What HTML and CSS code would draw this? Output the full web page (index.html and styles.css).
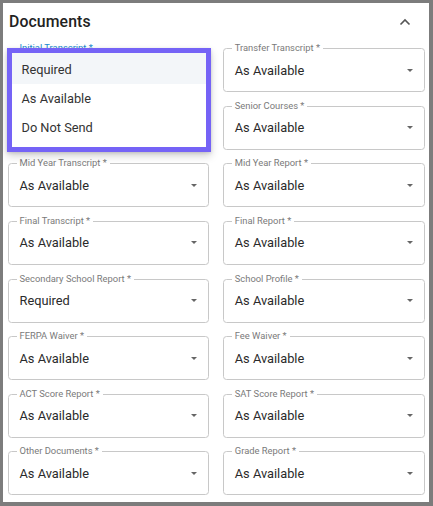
FILE: index.html
```html
<!DOCTYPE html>
<html>
<head>
<meta charset="utf-8">
<link rel="stylesheet" href="styles.css">
</head>
<body>
<div class="panel">
  <div class="header">
    <h2 class="title">Documents</h2>
    <svg class="chev" width="12" height="8" viewBox="0 0 12 8"><path d="M1.5 6.5 L6 2 L10.5 6.5" fill="none" stroke="#555" stroke-width="1.6"/></svg>
  </div>
  <div class="grid">
    <div class="field focused"><span class="label">Initial Transcript *</span><span class="value"></span><span class="caret"></span></div>
    <div class="field"><span class="label">Transfer Transcript *</span><span class="value">As Available</span><span class="caret"></span></div>
    <div class="field"><span class="value"></span><span class="caret"></span></div>
    <div class="field"><span class="label">Senior Courses *</span><span class="value">As Available</span><span class="caret"></span></div>
    <div class="field"><span class="label">Mid Year Transcript *</span><span class="value">As Available</span><span class="caret"></span></div>
    <div class="field"><span class="label">Mid Year Report *</span><span class="value">As Available</span><span class="caret"></span></div>
    <div class="field"><span class="label">Final Transcript *</span><span class="value">As Available</span><span class="caret"></span></div>
    <div class="field"><span class="label">Final Report *</span><span class="value">As Available</span><span class="caret"></span></div>
    <div class="field"><span class="label">Secondary School Report *</span><span class="value">Required</span><span class="caret"></span></div>
    <div class="field"><span class="label">School Profile *</span><span class="value">As Available</span><span class="caret"></span></div>
    <div class="field"><span class="label">FERPA Waiver *</span><span class="value">As Available</span><span class="caret"></span></div>
    <div class="field"><span class="label">Fee Waiver *</span><span class="value">As Available</span><span class="caret"></span></div>
    <div class="field"><span class="label">ACT Score Report *</span><span class="value">As Available</span><span class="caret"></span></div>
    <div class="field"><span class="label">SAT Score Report *</span><span class="value">As Available</span><span class="caret"></span></div>
    <div class="field"><span class="label">Other Documents *</span><span class="value">As Available</span><span class="caret"></span></div>
    <div class="field"><span class="label">Grade Report *</span><span class="value">As Available</span><span class="caret"></span></div>
  </div>
  <div class="menu">
    <div class="item selected">Required</div>
    <div class="item">As Available</div>
    <div class="item">Do Not Send</div>
  </div>
</div>
</body>
</html>
```
FILE: styles.css
```css
html, body {
  margin: 0;
  padding: 0;
}
body {
  background: #7c7c7c;
  width: 433px;
  height: 506px;
  overflow: hidden;
  font-family: Roboto, "Liberation Sans", sans-serif;
}
.panel {
  position: relative;
  margin: 3px 4px 0 3px;
  height: 499px;
  background: #fff;
  overflow: hidden;
}
.header {
  height: 37px;
  display: flex;
  align-items: center;
  justify-content: space-between;
  padding: 0 18px 0 6px;
}
.title {
  margin: 0;
  font-size: 15.8px;
  font-weight: 500;
  color: #222;
  letter-spacing: 0.1px;
}
.chev {
  display: block;
}
.grid {
  margin-top: 8.3px;
  padding: 0 4.5px 0 5px;
  display: grid;
  grid-template-columns: 1fr 1fr;
  column-gap: 14px;
  row-gap: 13.57px;
}
.field {
  position: relative;
  height: 44px;
  box-sizing: border-box;
  border: 1px solid #c8c8c8;
  border-radius: 3.5px;
  display: flex;
  align-items: center;
  padding: 0 0 0 10.5px;
}
.field.focused {
  border: 2px solid #1a8ad0;
}
.label {
  position: absolute;
  left: 7.5px;
  top: -7px;
  padding: 0 3px;
  background: #fff;
  font-size: 9.4px;
  line-height: 12px;
  color: #7a7a7a;
}
.focused .label {
  color: #1a8ad0;
  left: 6.5px;
  top: -8px;
}
.value {
  flex: 1;
  font-size: 12.8px;
  color: #2a2a2a;
}
.caret {
  width: 0;
  height: 0;
  border-left: 3.8px solid transparent;
  border-right: 3.8px solid transparent;
  border-top: 3.8px solid #666;
  margin-right: 11px;
}
.menu {
  position: absolute;
  left: 4px;
  top: 44.7px;
  width: 204px;
  height: 104px;
  box-sizing: border-box;
  border: 5.3px solid #7563f6;
  background: #fff;
  padding-bottom: 4px;
  box-shadow: 0 4px 8px rgba(0,0,0,0.18), 0 1px 3px rgba(0,0,0,0.12);
}
.item {
  height: 28.7px;
  display: flex;
  align-items: center;
  padding-left: 9.5px;
  font-size: 12.8px;
  color: #333;
}
.item.selected {
  height: 31.4px;
  background: #f3f6f9;
  padding-top: 1.5px;
  box-sizing: border-box;
}
```
